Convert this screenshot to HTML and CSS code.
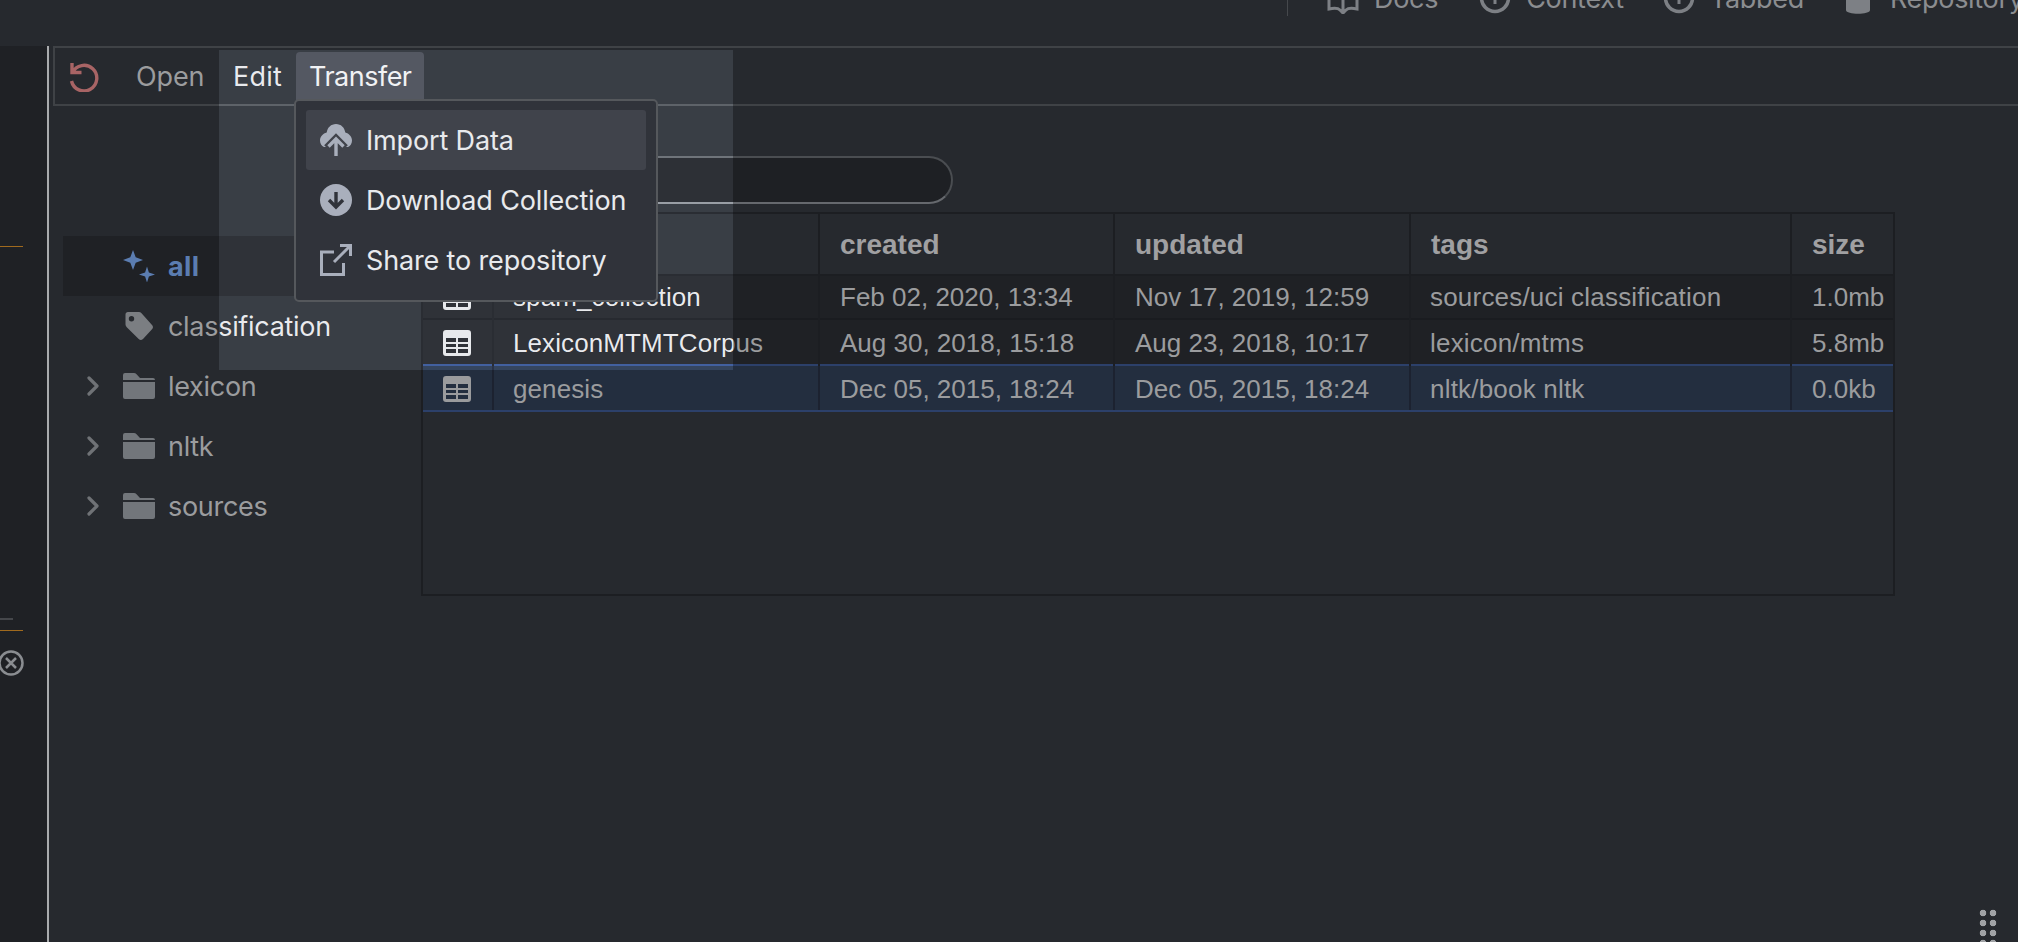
FILE: index.html
```html
<!DOCTYPE html>
<html lang="en">
<head>
<meta charset="utf-8">
<title>Collections</title>
<link rel="stylesheet" href="styles.css">
</head>
<body>
<svg class="defs" width="0" height="0" aria-hidden="true">
  <symbol id="i-table" viewBox="0 0 28 26">
    <path fill-rule="evenodd" d="M3 0h22a3 3 0 0 1 3 3v20a3 3 0 0 1-3 3H3a3 3 0 0 1-3-3V3a3 3 0 0 1 3-3zM3 8v4h10V8zm12 0v4h10V8zM3 14v3h10v-3zm12 0v3h10v-3zM3 19v4h10v-4zm12 0v4h10v-4z"/>
  </symbol>
  <symbol id="i-folder" viewBox="0 0 32 26">
    <path d="M2 0h9c1 0 1.700.4 2.300 1L17 5h13a2 2 0 0 1 2 2H0V2a2 2 0 0 1 2-2zM0 9h32v15a2 2 0 0 1-2 2H2a2 2 0 0 1-2-2z"/>
  </symbol>
  <symbol id="i-chevron" viewBox="0 0 12 20">
    <path d="M2 2l8 8-8 8" fill="none" stroke="currentColor" stroke-width="3.200" stroke-linecap="round" stroke-linejoin="round"/>
  </symbol>
</svg>

<header class="topbar">
  <nav class="topnav">
    <span class="topsep"></span>
    <span class="navitem nav-docs">
      <svg class="navicon" viewBox="0 0 32 32"><path d="M2 8c5-2 10-2 14 1 4-3 9-3 14-1v19c-5-1-9-1-11 1l-3 3-3-3c-2-2-6-2-11-1zM16 9v20" fill="none" stroke="#7d8085" stroke-width="3"/></svg>
      Docs
    </span>
    <span class="navitem nav-context">
      <svg class="navicon" viewBox="0 0 32 32"><circle cx="16" cy="16" r="13.500" fill="none" stroke="#7d8085" stroke-width="3.500"/><path d="M16 10v12" stroke="#7d8085" stroke-width="3"/></svg>
      Context
    </span>
    <span class="navitem nav-tabbed">
      <svg class="navicon" viewBox="0 0 32 32"><circle cx="16" cy="16" r="13.500" fill="none" stroke="#7d8085" stroke-width="3.500"/><path d="M16 10v12" stroke="#7d8085" stroke-width="3"/></svg>
      Tabbed
    </span>
    <span class="navitem nav-repo">
      <svg class="navicon navicon-db" viewBox="0 0 24 32"><path d="M0 4c0-6 24-6 24 0v24c0 5-24 5-24 0z" fill="#7d8085"/></svg>
      Repository
    </span>
  </nav>
</header>

<div class="workspace">
  <aside class="rail">
    <span class="rail-line rail-line-a"></span>
    <span class="rail-line rail-line-gray"></span>
    <span class="rail-line rail-line-b"></span>
    <svg class="rail-close" viewBox="0 0 26 26"><circle cx="13" cy="13" r="11.500" fill="none" stroke="#8a8d91" stroke-width="2.500"/><path d="M8 8l10 10M18 8L8 18" stroke="#8a8d91" stroke-width="2.500"/></svg>
  </aside>

  <main class="content">
    <div class="toolbar">
      <svg class="reload" viewBox="0 0 32 32"><path d="M5 3v9.500h9.500M5.500 12.500A12.800 12.800 0 1 1 4.500 21" fill="none" stroke="#a86465" stroke-width="3.400"/></svg>
      <span class="tab tab-open">Open</span>
      <span class="tab tab-edit">Edit</span>
      <span class="tab tab-active">Transfer</span>
    </div>

    <div class="panes">
      <ul class="tree">
        <li class="tree-row tree-row-active">
          <span class="chev-slot"></span>
          <svg class="tree-icon" viewBox="0 0 32 32"><path fill="#5b7db1" d="M10 0l2.700 7.300L20 10l-7.300 2.700L10 20l-2.700-7.300L0 10l7.300-2.700zM24 16.500l1.900 6.100L32 24.500l-6.100 1.900L24 32.500l-1.900-6.100L16 24.500l6.100-1.900z"/></svg>
          <span>all</span>
        </li>
        <li class="tree-row">
          <span class="chev-slot"></span>
          <svg class="tree-icon" viewBox="0 0 32 32"><path fill-rule="evenodd" fill="#7b7e82" d="M5 2h11c1 0 1.700.3 2.300 1L29 15c1.300 1.400 1.300 3 0 4.300L20 29c-1.400 1.300-3 1.300-4.300 0L4 17.500c-1-1-1.500-2-1.500-3V4.500C2.500 3 3.500 2 5 2zm3.500 4a2.700 2.700 0 1 0 0 5.400 2.700 2.700 0 0 0 0-5.400z"/></svg>
          <span>classification</span>
        </li>
        <li class="tree-row">
          <svg class="chev"><use href="#i-chevron"/></svg>
          <svg class="tree-icon tree-folder"><use href="#i-folder"/></svg>
          <span>lexicon</span>
        </li>
        <li class="tree-row">
          <svg class="chev"><use href="#i-chevron"/></svg>
          <svg class="tree-icon tree-folder"><use href="#i-folder"/></svg>
          <span>nltk</span>
        </li>
        <li class="tree-row">
          <svg class="chev"><use href="#i-chevron"/></svg>
          <svg class="tree-icon tree-folder"><use href="#i-folder"/></svg>
          <span>sources</span>
        </li>
      </ul>

      <section class="results">
        <div class="search"></div>
        <div class="table-frame">
          <table class="grid">
            <colgroup>
              <col class="c-icon"><col class="c-name"><col class="c-created"><col class="c-updated"><col class="c-tags"><col class="c-size">
            </colgroup>
            <thead>
              <tr><th></th><th></th><th>created</th><th>updated</th><th>tags</th><th>size</th></tr>
            </thead>
            <tbody>
              <tr>
                <td class="cell-icon"><svg class="table-icon"><use href="#i-table"/></svg></td>
                <td class="cell-name">spam_collection</td>
                <td>Feb 02, 2020, 13:34</td><td>Nov 17, 2019, 12:59</td><td class="cell-tags">sources/uci classification</td><td>1.0mb</td>
              </tr>
              <tr class="row-b">
                <td class="cell-icon"><svg class="table-icon"><use href="#i-table"/></svg></td>
                <td class="cell-name">LexiconMTMTCorpus</td>
                <td>Aug 30, 2018, 15:18</td><td>Aug 23, 2018, 10:17</td><td class="cell-tags">lexicon/mtms</td><td>5.8mb</td>
              </tr>
              <tr class="row-selected">
                <td class="cell-icon"><svg class="table-icon"><use href="#i-table"/></svg></td>
                <td class="cell-name">genesis</td>
                <td>Dec 05, 2015, 18:24</td><td>Dec 05, 2015, 18:24</td><td class="cell-tags">nltk/book nltk</td><td>0.0kb</td>
              </tr>
            </tbody>
          </table>
        </div>
      </section>
    </div>
  </main>
</div>

<div class="sheen"></div>

<div class="menu">
  <div class="menu-item menu-item-hover">
    <svg class="menu-icon" viewBox="0 0 32 32">
      <path fill="#a9afbc" d="M16 0c5 0 8.500 3.500 9.300 8.500C29 9.500 32 12.500 32 16.500c0 3-1.500 5.300-4 6.500H4c-2.500-1.200-4-3.500-4-6.500 0-4 3-7 6.700-8C7.500 3.500 11 0 16 0z"/>
      <path d="M7 24l9-9 9 9M16 16v16" fill="none" stroke="#40434b" stroke-width="8"/>
      <path d="M8.500 22.500L16 15l7.500 7.500M16 16v16" fill="none" stroke="#a9afbc" stroke-width="3.400"/>
    </svg>
    Import Data
  </div>
  <div class="menu-item">
    <svg class="menu-icon" viewBox="0 0 32 32">
      <circle cx="16" cy="16" r="16" fill="#a9afbc"/>
      <path d="M9 16l7 7 7-7M16 22V8" fill="none" stroke="#30333a" stroke-width="3.400"/>
    </svg>
    Download Collection
  </div>
  <div class="menu-item">
    <svg class="menu-icon" viewBox="0 0 32 32">
      <path d="M14 8H1.500v22.500h22V19" fill="none" stroke="#a9afbc" stroke-width="3"/>
      <path d="M20 1.500h10.500V12M30 2L14 18" fill="none" stroke="#a9afbc" stroke-width="3"/>
    </svg>
    Share to repository
  </div>
</div>

<div class="grip"></div>
</body>
</html>
```
FILE: styles.css
```css
* { box-sizing: border-box; }

html, body {
  margin: 0;
  height: 942px;
  overflow: hidden;
}

body {
  position: relative;
  background: #26292e;
  color: #9b9c9e;
  font-family: Inter, "Liberation Sans", sans-serif;
  font-size: 27px;
  letter-spacing: -0.3px;
}

.defs { position: absolute; }

/* top bar */
.topbar {
  height: 46px;
  overflow: hidden;
  background: #26292e;
}

.topnav {
  display: flex;
  align-items: center;
  height: 32px;
  margin-top: -18px;
  padding-left: 1287px;
  color: #8b8d90;
  white-space: nowrap;
}

.topsep {
  flex: none;
  align-self: flex-start;
  width: 1px;
  height: 34px;
  background: #45484c;
}

.navitem {
  display: flex;
  flex: none;
  align-items: center;
  gap: 15px;
}

.nav-docs { margin-left: 39px; }
.nav-context { margin-left: 41px; }
.nav-tabbed { margin-left: 39px; }
.nav-repo { margin-left: 42px; }
.nav-repo .navicon { margin-right: 5px; }

.navicon { width: 32px; height: 32px; flex: none; }
.navicon-db { width: 24px; }

/* workspace */
.workspace {
  display: flex;
  height: 896px;
}

.rail {
  flex: none;
  position: relative;
  width: 49px;
  padding-top: 200px;
  background: #1f2125;
  border-right: 2px solid #a9abad;
}

.rail-line { display: block; height: 1px; }
.rail-line-a { width: 23px; background: #a06a1e; }
.rail-line-gray { width: 13px; height: 2px; margin-top: 371px; background: #45474b; }
.rail-line-b { width: 23px; margin-top: 10px; background: #a06a1e; }
.rail-close { display: block; width: 26px; height: 26px; margin: 19px 0 0 -2px; }

.content {
  flex: 1;
  min-width: 0;
}

/* toolbar */
.toolbar {
  display: flex;
  align-items: flex-start;
  height: 60px;
  margin-left: 4px;
  padding: 4px 0 0 12px;
  border: 2px solid #3f4246;
  border-right: 0;
}

.reload {
  flex: none;
  width: 32px;
  height: 32px;
  margin: 8px 24px 0 0;
}

.tab {
  display: flex;
  align-items: center;
  height: 48px;
  padding: 0 13px;
  border-radius: 4px 4px 0 0;
}

.tab-open { width: 95px; margin-right: 2px; letter-spacing: -0.1px; }
.tab-edit { width: 76px; color: #9b9c9e; letter-spacing: 0.2px; }
.tab-active {
  position: relative;
  z-index: 2;
  width: 128px;
  background: #545862;
  color: #f1f2f4;
  letter-spacing: -0.5px;
}

/* panes */
.panes { display: flex; }

.tree {
  flex: none;
  width: 352px;
  margin: 130px 0 0 14px;
  padding: 0;
  list-style: none;
}

.tree-row {
  display: flex;
  align-items: center;
  height: 60px;
  padding-left: 24px;
}

.tree-row-active {
  background: #1f2125;
  color: #5b7db1;
  font-weight: 700;
  letter-spacing: 0.4px;
}

.chev-slot, .chev {
  flex: none;
  width: 12px;
  height: 20px;
  margin-right: 24px;
}

.chev { color: #6f7276; }

.tree-icon {
  flex: none;
  width: 32px;
  height: 32px;
  margin-right: 13px;
}

.tree-folder {
  height: 26px;
  fill: #72767b;
}

.results {
  flex: none;
  width: 1474px;
  margin-left: 6px;
  padding-top: 50px;
}

.search {
  width: 454px;
  height: 48px;
  margin-left: 78px;
  background: #1e2024;
  border: 2px solid #4a4d51;
  border-bottom-color: #66696e;
  border-radius: 24px;
}

.table-frame {
  height: 384px;
  margin-top: 8px;
  border: 2px solid #1c1e22;
}

.grid {
  width: 1470px;
  border-collapse: collapse;
  table-layout: fixed;
  font-family: "Liberation Sans", Arial, sans-serif;
  font-size: 26px;
  letter-spacing: 0;
}

.c-icon { width: 70px; }
.c-name { width: 326px; }
.c-created { width: 295px; }
.c-updated { width: 296px; }
.c-tags { width: 381px; }
.c-size { width: 102px; }

.grid th, .grid td {
  padding: 0 0 0 20px;
  border-right: 2px solid #1c1e22;
  text-align: left;
  white-space: nowrap;
  overflow: visible;
}

.grid th:last-child, .grid td:last-child { border-right: 0; }

.grid th {
  height: 61px;
  padding-top: 2px;
  border-bottom: 2px solid #1c1e22;
  color: #a0a0a2;
  font-size: 28px;
  font-weight: 700;
}

.grid td {
  height: 44px;
  background: #1f2125;
}

.grid .cell-name { padding-left: 19px; letter-spacing: 0.1px; }
.grid .cell-tags { padding-left: 19px; letter-spacing: 0.2px; }

.row-b td {
  height: 46px;
  padding-top: 2px;
  border-top: 2px solid #1a1c20;
}

.row-selected td {
  height: 46px;
  padding-top: 2px;
  background: #232e3f;
  border-top: 2px solid #2c406a;
  border-bottom: 2px solid #2c406a;
  border-right-color: #1c2230;
}

.grid .cell-icon {
  padding-left: 20px;
  line-height: 0;
}

.table-icon {
  width: 28px;
  height: 26px;
  fill: #9a9b9d;
  vertical-align: middle;
}

/* highlight band of the opening menu */
.sheen {
  position: absolute;
  z-index: 1;
  top: 50px;
  left: 219px;
  width: 514px;
  height: 320px;
  backdrop-filter: brightness(1.5);
}

/* dropdown */
.menu {
  position: absolute;
  z-index: 3;
  top: 99px;
  left: 294px;
  width: 364px;
  height: 203px;
  padding: 9px 10px;
  background: #30333a;
  border: 2px solid #55585c;
  border-radius: 5px;
}

.menu-item {
  display: flex;
  align-items: center;
  gap: 14px;
  height: 60px;
  padding-left: 14px;
  color: #e8eaed;
  border-radius: 3px;
  letter-spacing: -0.15px;
}

.menu-item-hover { background: #40434b; }

.menu-icon {
  flex: none;
  width: 32px;
  height: 32px;
}

/* resize grip */
.grip {
  position: absolute;
  right: 20px;
  bottom: 0;
  width: 20px;
  height: 34px;
  background: radial-gradient(circle at 5px 5px, #a0a2a5 3px, transparent 3.600px) 0 0 / 10px 10px;
}
```
